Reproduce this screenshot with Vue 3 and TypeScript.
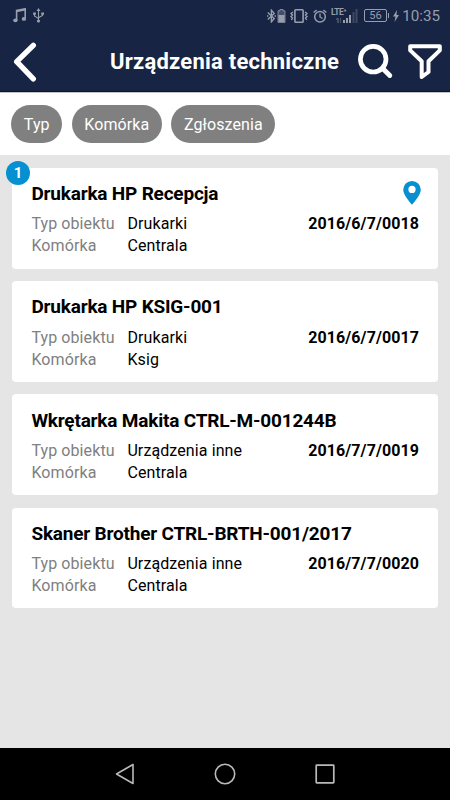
<script setup lang="ts">
interface Device {
  name: string
  type: string
  cell: string
  code: string
  badge?: number
  located?: boolean
}

const filters: string[] = ['Typ', 'Komórka', 'Zgłoszenia']

const devices: Device[] = [
  { name: 'Drukarka HP Recepcja', type: 'Drukarki', cell: 'Centrala', code: '2016/6/7/0018', badge: 1, located: true },
  { name: 'Drukarka HP KSIG-001', type: 'Drukarki', cell: 'Ksig', code: '2016/6/7/0017' },
  { name: 'Wkrętarka Makita CTRL-M-001244B', type: 'Urządzenia inne', cell: 'Centrala', code: '2016/7/7/0019' },
  { name: 'Skaner Brother CTRL-BRTH-001/2017', type: 'Urządzenia inne', cell: 'Centrala', code: '2016/7/7/0020' },
]
</script>

<template>
  <div class="screen">
    <header class="top">
      <div class="status">
        <svg class="music" width="14" height="15" viewBox="0 0 14 15">
          <path d="M3.6 12V2.4L12.2.8v9.8M3.6 3.4l8.6-1.6" fill="none" stroke="currentColor" stroke-width="1.6" />
          <ellipse cx="2.4" cy="12.3" rx="2.2" ry="1.9" fill="currentColor" />
          <ellipse cx="10.9" cy="10.9" rx="2.2" ry="1.9" fill="currentColor" />
        </svg>
        <svg class="usb" width="11" height="15" viewBox="0 0 11 15">
          <path d="M5.5 2v11M1.5 6v2l4 2.6M9.5 6v1.5l-4 2.2" fill="none" stroke="currentColor" stroke-width="1.1" />
          <path d="M5.5 0l2 3h-4zM.1 4.4h2.8v2.4H.1zM8.2 4.4H11v2.4H8.2z" fill="currentColor" />
          <circle cx="5.5" cy="13" r="1.6" fill="currentColor" />
        </svg>
        <span class="spacer"></span>
        <svg class="bluetooth" width="9" height="14" viewBox="0 0 9 14">
          <path d="M.8 3.6l6.4 6L4.4 12.8V1.2l2.8 3.2-6.4 6" fill="none" stroke="currentColor" stroke-width="1.4" />
          <path d="M0 6.2h1.4v1.6H0zM7.6 6.2H9v1.6H7.6z" fill="currentColor" />
        </svg>
        <svg class="device-battery" width="9" height="14" viewBox="0 0 9 14">
          <path d="M3 .4h3v1.4h2v11.6H1V1.8h2z" fill="currentColor" fill-opacity=".35" stroke="currentColor" stroke-width=".8" />
          <path d="M1.5 6h6v7h-6z" fill="currentColor" />
        </svg>
        <svg class="vibrate" width="18" height="14" viewBox="0 0 18 14">
          <rect x="4.9" y=".8" width="8.2" height="12.4" rx=".8" fill="none" stroke="currentColor" stroke-width="1.6" />
          <path d="M3 3L1 4.5 2.5 6 1 7.5 2.5 9 1.3 11M15 3l2 1.5L15.5 6 17 7.5 15.5 9l1.2 2" fill="none" stroke="currentColor" stroke-width="1.4" />
        </svg>
        <svg class="alarm" width="14" height="14" viewBox="0 0 14 14">
          <circle cx="7" cy="7.7" r="5.3" fill="none" stroke="currentColor" stroke-width="1.5" />
          <path d="M.6 3.5L3.6 1M13.4 3.5L10.4 1M7 4.6V8l2.5 1.5" fill="none" stroke="currentColor" stroke-width="1.3" />
        </svg>
        <div class="network">
          <span class="lte">LTE⁺</span>
          <svg class="bars" width="22" height="14" viewBox="0 0 22 14">
            <path d="M0 9h3v5H1V11H0zM4 9h1v5H4z" fill="currentColor" opacity=".35" />
            <path d="M7 11h2v3H7zM10 9h2v5h-2zM13 6h2v8h-2z" fill="currentColor" />
            <path d="M16.5 3h2v11h-2zM19.500 0h2v14h-2z" fill="currentColor" opacity=".3" />
          </svg>
        </div>
        <div class="battery">56</div>
        <svg class="bolt" width="6" height="12" viewBox="0 0 6 12">
          <path d="M4 0L0 6.5h2.5L1.5 12 6 5H3.5z" fill="currentColor" />
        </svg>
        <span class="clock">10:35</span>
      </div>
      <div class="bar">
        <button class="back" aria-label="Wstecz">
          <svg width="24" height="40" viewBox="0 0 24 40">
            <path d="M20.3 3.3L3.7 19.7 20.3 36.8" fill="none" stroke="#fff" stroke-width="5.4" stroke-linecap="round" stroke-linejoin="round" />
          </svg>
        </button>
        <h1>Urządzenia techniczne</h1>
        <button class="search" aria-label="Szukaj">
          <svg width="36" height="36" viewBox="0 0 36 36">
            <circle cx="15.2" cy="15.2" r="12.8" fill="none" stroke="#fff" stroke-width="4.7" />
            <path d="M24.5 24.2l7.3 7.3" stroke="#fff" stroke-width="4.8" stroke-linecap="round" />
          </svg>
        </button>
        <button class="funnel" aria-label="Filtruj">
          <svg width="34" height="36" viewBox="0 0 34 36">
            <path d="M2.2 2.2h29.600v4.200L20.500 17.300V28l-6.800 5V17.300L2.200 6.400z" fill="none" stroke="#fff" stroke-width="4" stroke-linejoin="round" />
          </svg>
        </button>
      </div>
    </header>

    <nav class="filters">
      <button v-for="f in filters" :key="f" class="chip">{{ f }}</button>
    </nav>

    <main class="list">
      <article v-for="d in devices" :key="d.code" class="card">
        <span v-if="d.badge" class="badge">{{ d.badge }}</span>
        <div class="heading">
          <h2>{{ d.name }}</h2>
          <svg v-if="d.located" class="pin" width="18" height="24" viewBox="0 0 18 24">
            <path fill-rule="evenodd" d="M9 0a8.800 8.800 0 0 0-8.800 8.800C.2 14.500 9 23.700 9 23.700s8.800-9.200 8.800-14.900A8.800 8.800 0 0 0 9 0zm0 4.800a3.600 3.600 0 1 1 0 7.200 3.600 3.600 0 0 1 0-7.200z" fill="#0690d2" />
          </svg>
        </div>
        <div class="row">
          <span class="label">Typ obiektu</span>
          <span class="value">{{ d.type }}</span>
          <strong class="code">{{ d.code }}</strong>
        </div>
        <div class="row">
          <span class="label">Komórka</span>
          <span class="value">{{ d.cell }}</span>
        </div>
      </article>
    </main>

    <footer class="navbar">
      <svg width="20" height="22" viewBox="0 0 20 22">
        <path d="M18 1.5v19L1.5 11z" fill="none" stroke="#b9b9b9" stroke-width="1.6" stroke-linejoin="round" />
      </svg>
      <svg width="22" height="22" viewBox="0 0 22 22">
        <circle cx="11" cy="11" r="9.7" fill="none" stroke="#b9b9b9" stroke-width="1.6" />
      </svg>
      <svg width="20" height="20" viewBox="0 0 20 20">
        <rect x="1.2" y="1.2" width="17.600" height="17.600" rx=".5" fill="none" stroke="#b9b9b9" stroke-width="1.7" />
      </svg>
    </footer>
  </div>
</template>

<style>
body {
  margin: 0;
}
</style>

<style scoped>
.screen {
  width: 450px;
  height: 800px;
  display: flex;
  flex-direction: column;
  background: #e5e5e5;
  font-family: Roboto, sans-serif;
  color: #000;
  overflow: hidden;
}
button {
  border: 0;
  padding: 0;
  background: none;
  font: inherit;
}
svg {
  display: block;
  flex: none;
}
.top {
  height: 92px;
  box-sizing: border-box;
  background: #172443;
  border-bottom: 1px solid #0b1431;
}
.status {
  height: 31px;
  display: flex;
  align-items: center;
  padding: 0 10px 0 13px;
  color: #989eac;
}
.usb {
  margin-left: 6px;
}
.spacer {
  flex: 1;
}
.device-battery {
  margin-left: 1px;
}
.vibrate {
  margin-left: 4px;
}
.alarm {
  margin-left: 5px;
}
.network {
  width: 27px;
  height: 16px;
  margin-left: 4px;
  position: relative;
}
.lte {
  position: absolute;
  left: 0;
  top: 0;
  font-size: 8.5px;
  line-height: 8px;
  font-weight: 700;
  letter-spacing: -0.5px;
}
.bars {
  position: absolute;
  right: 0;
  top: 1px;
}
.battery {
  width: 23px;
  height: 13px;
  box-sizing: border-box;
  margin-left: 6px;
  border: 1px solid currentColor;
  border-radius: 2px;
  font-size: 11px;
  line-height: 11px;
  text-align: center;
  position: relative;
}
.battery::after {
  content: '';
  position: absolute;
  right: -3px;
  top: 3px;
  width: 1px;
  height: 5px;
  background: currentColor;
}
.bolt {
  margin-left: 6px;
}
.clock {
  margin-left: 3px;
  font-size: 15.2px;
  width: 38px;
  text-align: right;
}
.bar {
  height: 60px;
  display: flex;
  align-items: center;
  padding: 1px 8px 0 13px;
  box-sizing: border-box;
}
.bar h1 {
  flex: 1;
  margin: 1px 0 0 73px;
  font-size: 22px;
  letter-spacing: 0.23px;
  line-height: 26px;
  font-weight: 700;
  color: #fff;
  white-space: nowrap;
}
.search,
.funnel {
  margin-top: 1px;
}
.funnel {
  margin-left: 14px;
}
.filters {
  height: 63px;
  box-sizing: border-box;
  border-top: 1px solid #c4c4c4;
  background: #fff;
  display: flex;
  align-items: flex-start;
  gap: 9.6px;
  padding: 12px 11px 0 11.3px;
}
.chip {
  height: 38px;
  padding: 0 12.5px;
  border-radius: 19px;
  background: #808080;
  color: #fff;
  font-size: 16px;
  letter-spacing: 0.1px;
}
.list {
  flex: 1;
  display: flex;
  flex-direction: column;
  gap: 12.4px;
  padding: 12.7px 12.4px 0;
}
.card {
  height: 100.9px;
  box-sizing: border-box;
  position: relative;
  padding: 12.5px 18.5px 0 19px;
  background: #fff;
  border-radius: 4px;
}
.badge {
  position: absolute;
  left: -6.4px;
  top: -6.6px;
  width: 24px;
  height: 24px;
  border-radius: 50%;
  background: #0690d2;
  color: #fff;
  font-size: 15px;
  line-height: 24px;
  font-weight: 700;
  text-align: center;
}
.heading {
  height: 33.2px;
  display: flex;
  justify-content: space-between;
}
.heading h2 {
  margin: 2px 0 0;
  font-size: 19px;
  letter-spacing: -0.2px;
  line-height: 24px;
  font-weight: 700;
  white-space: nowrap;
}
.pin {
  margin: 0.5px -2px 0 0;
}
.row {
  display: flex;
  font-size: 16px;
  letter-spacing: 0.1px;
  line-height: 22px;
}
.label {
  width: 96px;
  color: #808080;
}
.code {
  margin-left: auto;
  font-weight: 700;
}
.navbar {
  height: 52px;
  display: flex;
  align-items: center;
  justify-content: space-between;
  padding: 0 115px;
  background: #000;
}
</style>
